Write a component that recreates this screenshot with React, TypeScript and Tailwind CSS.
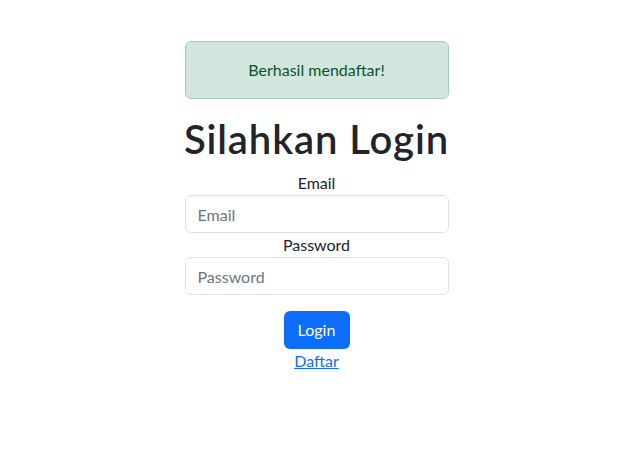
export default function App() {
  const font = { fontFamily: 'Lato, "Segoe UI", sans-serif' };
  return (
    <div className="min-h-[459px] bg-white flex justify-center pt-[41px]" style={font}>
      <div className="w-[264px] flex flex-col items-center text-[16px] leading-[24px] text-[#212529]">
        <div className="w-full h-[58px] rounded-[6px] border border-[#a3cfbb] bg-[#d1e7dd] text-[#0f5132] flex items-center justify-center">
          Berhasil mendaftar!
        </div>
        <h1 className="mt-[16px] mb-[8px] text-[40px] leading-[48px] font-semibold tracking-[0.9px] whitespace-nowrap text-[#212529]">Silahkan Login</h1>
        <label className="block">Email</label>
        <input
          placeholder="Email"
          className="w-full h-[38px] rounded-[6px] border border-[#dee2e6] px-[12px] outline-none placeholder:text-[#6c757d]"
        />
        <label className="block">Password</label>
        <input
          placeholder="Password"
          type="password"
          className="w-full h-[38px] rounded-[6px] border border-[#dee2e6] px-[12px] outline-none placeholder:text-[#6c757d]"
        />
        <button className="mt-[16px] h-[38px] w-[66px] rounded-[6px] bg-[#0d6efd] text-white">Login</button>
        <a href="#" className="text-[#0d6efd] underline">Daftar</a>
      </div>
    </div>
  );
}
